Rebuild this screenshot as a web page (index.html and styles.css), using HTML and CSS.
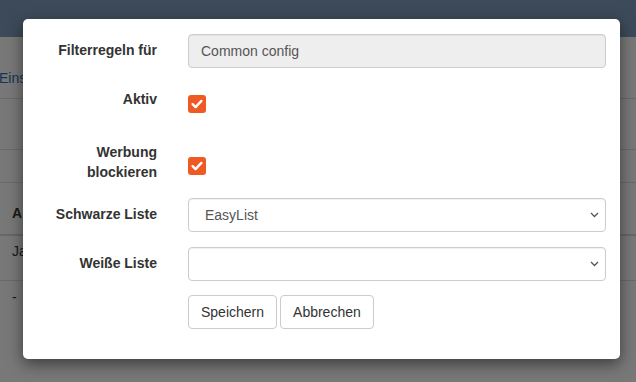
FILE: index.html
```html
<!DOCTYPE html>
<html lang="de">
<head>
    <meta charset="UTF-8">
    <title>Filterregeln</title>
    <link rel="stylesheet" href="styles.css">
</head>
<body>

<!-- Page behind the dialog -->
<header class="topbar"></header>
<div class="page">
    <div class="tabs"><span class="tab-link">Einst</span></div>
    <div class="strip"></div>
    <div class="strip short"></div>
    <div class="table-head">A</div>
    <div class="table-row">Ja</div>
    <div class="table-row plain">-</div>
</div>

<div class="backdrop"></div>

<!-- Dialog -->
<div class="modal">
    <div class="form-row">
        <label class="form-label">Filterregeln für</label>
        <div class="form-field">
            <input class="text-input" type="text" value="Common config" readonly>
        </div>
    </div>

    <div class="form-row check-row">
        <label class="form-label">Aktiv</label>
        <div class="form-field">
            <span class="check">
                <svg width="18" height="18" viewBox="0 0 18 18"><path d="M4.6 9.2 L7.6 12.1 L13.4 5.9" fill="none" stroke="#fff" stroke-width="2.4" stroke-linecap="round" stroke-linejoin="round"/></svg>
            </span>
        </div>
    </div>

    <div class="form-row check-row tall">
        <label class="form-label">Werbung blockieren</label>
        <div class="form-field">
            <span class="check">
                <svg width="18" height="18" viewBox="0 0 18 18"><path d="M4.6 9.2 L7.6 12.1 L13.4 5.9" fill="none" stroke="#fff" stroke-width="2.4" stroke-linecap="round" stroke-linejoin="round"/></svg>
            </span>
        </div>
    </div>

    <div class="form-row">
        <label class="form-label">Schwarze Liste</label>
        <div class="form-field select-wrap">
            <select class="select-input">
                <option>EasyList</option>
            </select>
            <svg class="chevron" width="9" height="6" viewBox="0 0 9 6"><path d="M1 1 L4.5 4.5 L8 1" fill="none" stroke="#555" stroke-width="1.3"/></svg>
        </div>
    </div>

    <div class="form-row before-buttons">
        <label class="form-label">Weiße Liste</label>
        <div class="form-field select-wrap">
            <select class="select-input">
                <option></option>
            </select>
            <svg class="chevron" width="9" height="6" viewBox="0 0 9 6"><path d="M1 1 L4.5 4.5 L8 1" fill="none" stroke="#555" stroke-width="1.3"/></svg>
        </div>
    </div>

    <div class="form-row last">
        <span class="form-label"></span>
        <div class="form-field buttons">
            <button class="btn">Speichern</button>
            <button class="btn">Abbrechen</button>
        </div>
    </div>
</div>

</body>
</html>
```

FILE: styles.css
```css
body {
    font-family: "Liberation Sans", Arial, sans-serif;
    font-size: 14px;
    line-height: 20px;
    color: #333;
    margin: 0;
    background-color: #f0f0f0;
    width: 636px;
    height: 382px;
    overflow: hidden;
    position: relative;
}
.topbar {
    height: 37px;
    background-color: #7a95b2;
}
.page {
    background-color: #f0f0f0;
}
.tabs {
    height: 62px;
    border-bottom: 1px solid #d4d4d4;
    padding-top: 31px;
    box-sizing: border-box;
}
.tab-link {
    display: block;
    color: #2c6aa6;
    margin-left: -1px;
}
.strip {
    height: 51px;
    border-bottom: 1px solid #d4d4d4;
    box-sizing: border-box;
}
.strip.short {
    height: 33px;
}
.table-head {
    height: 53px;
    border-bottom: 2px solid #cfcfcf;
    font-weight: bold;
    padding: 20px 0 0 12px;
    box-sizing: border-box;
}
.table-row {
    height: 45px;
    border-bottom: 1px solid #d4d4d4;
    padding: 5px 0 0 12px;
    box-sizing: border-box;
}
.table-row.plain {
    border-bottom: none;
    padding-top: 6px;
}
.backdrop {
    position: absolute;
    inset: 0;
    background-color: rgba(0, 0, 0, 0.5);
}
.modal {
    position: absolute;
    left: 23px;
    top: 19px;
    width: 597px;
    height: 340px;
    box-sizing: border-box;
    background-color: #fff;
    border-radius: 5px;
    box-shadow: 0 5px 15px rgba(0, 0, 0, 0.5);
    padding: 15px 14px 0 0;
}
.form-row {
    display: flex;
    align-items: flex-start;
    margin-bottom: 15px;
}
.form-row.before-buttons {
    margin-bottom: 14px;
}
.form-row.last {
    margin-bottom: 0;
}
.form-label {
    width: 134px;
    flex-shrink: 0;
    box-sizing: border-box;
    padding: 6px 0 0 15px;
    text-align: right;
    font-weight: bold;
    color: #333;
}
.form-field {
    flex: 1;
    margin-left: 31px;
}
.text-input, .select-input {
    display: block;
    width: 100%;
    height: 34px;
    box-sizing: border-box;
    border: 1px solid #ccc;
    border-radius: 4px;
    font-family: inherit;
    font-size: 14px;
    color: #555;
    padding: 6px 12px;
    box-shadow: inset 0 1px 1px rgba(0, 0, 0, 0.06);
}
.text-input {
    background-color: #eee;
}
.select-input {
    background-color: #fff;
    appearance: none;
    -webkit-appearance: none;
    padding-left: 16px;
}
.select-wrap {
    position: relative;
}
.chevron {
    position: absolute;
    right: 7px;
    top: 14px;
}
.check-row {
    min-height: 38px;
}
.check-row .check {
    margin-top: 12px;
}
.check-row.tall {
    margin-bottom: 16px;
}
.check-row.tall .check {
    margin-top: 21px;
}
.check {
    display: block;
    width: 18px;
    height: 18px;
    border-radius: 3px;
    background-color: #ef5a24;
}
.check svg {
    display: block;
}
.buttons {
    display: flex;
    gap: 3px;
}
.btn {
    height: 34px;
    padding: 6px 12px;
    font-family: inherit;
    font-size: 14px;
    color: #333;
    background-color: #fff;
    border: 1px solid #ccc;
    border-radius: 4px;
}
```
